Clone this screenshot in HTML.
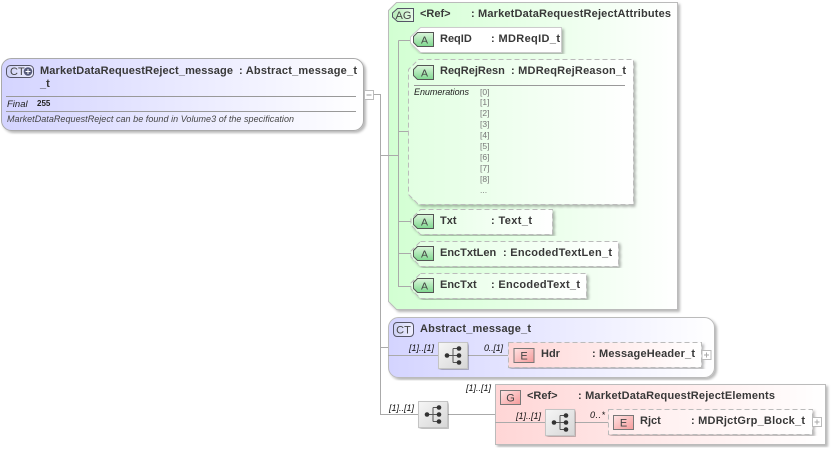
<!DOCTYPE html>
<html><head><meta charset="utf-8"><style>
html,body{margin:0;padding:0;background:#fff}
svg{display:block}
text{font-family:"Liberation Sans",sans-serif}
.b{font-size:11px;font-weight:bold;fill:#383838}
.i{font-size:9px;font-style:italic;fill:#222}
.g{font-size:8.5px;fill:#777}
.m{font-size:9px;font-style:italic;fill:#111}
.bt{font-size:11px;fill:#444;text-anchor:middle}
.l{stroke:#aaa;fill:none}
.d{stroke:#bbb;stroke-dasharray:5 3}
</style></head><body>
<svg width="831" height="450" viewBox="0 0 831 450" xmlns="http://www.w3.org/2000/svg">
<defs>
<linearGradient id="blue" x1="0" x2="1" y1="0" y2="0"><stop offset="0" stop-color="#d4d4ff"/><stop offset="1" stop-color="#fff"/></linearGradient>
<linearGradient id="green" x1="0" x2="1" y1="0" y2="0"><stop offset="0" stop-color="#d2ffd2"/><stop offset="1" stop-color="#fff"/></linearGradient>
<linearGradient id="green2" x1="0" x2="1" y1="0" y2="0"><stop offset="0" stop-color="#e2ffe2"/><stop offset="1" stop-color="#fff"/></linearGradient>
<linearGradient id="pink" x1="0" x2="1" y1="0" y2="0"><stop offset="0" stop-color="#ffd6d6"/><stop offset="1" stop-color="#fff"/></linearGradient>
<linearGradient id="pink2" x1="0" x2="1" y1="0" y2="0"><stop offset="0" stop-color="#ffecec"/><stop offset="1" stop-color="#fff"/></linearGradient>
<linearGradient id="bA" x1="0" x2="0" y1="0" y2="1"><stop offset="0" stop-color="#dcf6dc"/><stop offset="1" stop-color="#7fd88f"/></linearGradient>
<linearGradient id="bAG" x1="0" x2="1" y1="0" y2="0"><stop offset="0" stop-color="#b8ecb8"/><stop offset="1" stop-color="#e8fbe8"/></linearGradient>
<linearGradient id="bE" x1="0" x2="1" y1="0" y2="1"><stop offset="0" stop-color="#ffe4e4"/><stop offset="1" stop-color="#f59a9a"/></linearGradient>
<linearGradient id="bC" x1="0" x2="1" y1="0" y2="0"><stop offset="0" stop-color="#cfd2f5"/><stop offset="1" stop-color="#eeeeff"/></linearGradient>
<linearGradient id="seq" x1="0" x2="1" y1="0" y2="1"><stop offset="0" stop-color="#f6f6f6"/><stop offset="1" stop-color="#d6d6d6"/></linearGradient>
<filter id="sh" x="-5%" y="-5%" width="110%" height="110%"><feDropShadow dx="2" dy="2" stdDeviation="1.2" flood-color="#000" flood-opacity=".28"/></filter>
<g id="seqi">
<rect x="0.5" y="0.5" width="29" height="26" fill="url(#seq)" stroke="#c4c4c4" filter="url(#sh)"/>
<path d="M10 13.5H15M15 6.5V20.5M15 6.5H21M15 13.5H21M15 20.5H21" stroke="#555" fill="none"/>
<circle cx="9" cy="13.5" r="2.3" fill="#333"/><circle cx="21" cy="6.5" r="2.3" fill="#333"/><circle cx="21" cy="13.5" r="2.3" fill="#333"/><circle cx="21" cy="20.5" r="2.3" fill="#333"/>
</g>
<g id="bdgA">
<path d="M4.5 .5H20.5V14.5H4.5L.5 10.5V4.5Z" fill="url(#bA)" stroke="#555"/>
<text x="11.500" y="11.500" class="bt" style="font-size:10.5px">A</text>
</g>
<g id="plus">
<rect x=".5" y=".5" width="9" height="9" fill="#fff" stroke="#bbb"/><path d="M2.5 5H7.5M5 2.5V7.5" stroke="#aaa"/>
</g>
</defs>

<!-- outer connectors -->
<path class="l" d="M373 94.500H380.500V414.500H418M380 155.500H388M380 347.500H388M447 414.500H495"/>

<!-- main CT -->
<rect x="1.500" y="58.500" width="362" height="72" rx="10" fill="url(#blue)" stroke="#aaa" filter="url(#sh)"/>
<rect x="6.500" y="65.500" width="27" height="12" rx="4" fill="url(#bC)" stroke="#556"/>
<text x="10" y="75" class="bt" style="text-anchor:start;font-size:11px">CT</text>
<circle cx="28" cy="71.500" r="4.300" fill="#555a7a"/><path d="M25.500 71.500H30.500M28 69V74" stroke="#fff"/>
<text x="40" y="74" class="b" textLength="193">MarketDataRequestReject_message</text>
<text x="239" y="74" class="b" textLength="118">: Abstract_message_t</text>
<text x="40" y="87" class="b">_t</text>
<path d="M6 96.500H356M6 111.500H356" stroke="#999"/>
<text x="7" y="107" class="i" style="font-size:9.5px">Final</text>
<text x="37" y="106" style="font-size:8px;font-weight:bold;fill:#222">255</text>
<text x="7" y="122" class="i" style="fill:#444" textLength="287">MarketDataRequestReject can be found in Volume3 of the specification</text>
<rect x="364.500" y="90.500" width="9" height="9" fill="#fff" stroke="#bbb"/><path d="M366.500 95H371.500" stroke="#999"/>

<!-- AG -->
<path d="M396.500 2.500H677.500V309.500H396.500L388.500 301.500V10.500Z" fill="url(#green)" stroke="#bbb" filter="url(#sh)"/>
<path d="M397.500 8.500H413.500V21.500H397.500L392.500 17V13Z" fill="url(#bAG)" stroke="#556"/>
<text x="403.500" y="19" class="bt" style="font-size:11px">AG</text>
<text x="420" y="17" class="b">&lt;Ref&gt;</text>
<text x="471" y="17" class="b" textLength="200">: MarketDataRequestRejectAttributes</text>

<!-- inner connectors -->
<path class="l" d="M388 155.500H398.500M398.500 40.500V286.500H411M398.500 40.500H411M398.500 131.500H408M398.500 221.500H411M398.500 253.500H411"/>

<!-- ReqID -->
<path d="M420.500 27.500H561.500V52.500H420.500L410.500 43V37Z" fill="#fff" stroke="#ccc" filter="url(#sh)"/>
<use href="#bdgA" x="413" y="32"/>
<text x="440" y="42" class="b">ReqID</text>
<text x="491" y="42" class="b" textLength="69">: MDReqID_t</text>

<!-- ReqRejResn -->
<path d="M418.500 59.500H633.500V204.500H418.500L408.500 194.500V69.500Z" fill="url(#green2)" class="d" filter="url(#sh)"/>
<use href="#bdgA" x="413" y="65"/>
<text x="440" y="74" class="b">ReqRejResn</text>
<text x="511" y="74" class="b" textLength="115">: MDReqRejReason_t</text>
<path d="M414 85.500H625" stroke="#999"/>
<text x="414" y="95" class="i" textLength="55">Enumerations</text>
<text x="480" y="95" class="g">[0]</text>
<text x="480" y="105" class="g">[1]</text>
<text x="480" y="116" class="g">[2]</text>
<text x="480" y="127" class="g">[3]</text>
<text x="480" y="138" class="g">[4]</text>
<text x="480" y="149" class="g">[5]</text>
<text x="480" y="160" class="g">[6]</text>
<text x="480" y="171" class="g">[7]</text>
<text x="480" y="182" class="g">[8]</text>
<text x="480" y="193" class="g">...</text>

<!-- Txt -->
<path d="M420.500 209.500H552.500V234.500H420.500L411 225V219Z" fill="url(#green2)" class="d" filter="url(#sh)"/>
<use href="#bdgA" x="413" y="214"/>
<text x="440" y="224" class="b">Txt</text>
<text x="491" y="224" class="b" textLength="41">: Text_t</text>

<!-- EncTxtLen -->
<path d="M420.500 241.500H618.500V266.500H420.500L411 257V251Z" fill="url(#green2)" class="d" filter="url(#sh)"/>
<use href="#bdgA" x="413" y="246"/>
<text x="440" y="256" class="b">EncTxtLen</text>
<text x="503" y="256" class="b" textLength="109">: EncodedTextLen_t</text>

<!-- EncTxt -->
<path d="M420.500 273.500H586.500V298.500H420.500L411 289V283Z" fill="url(#green2)" class="d" filter="url(#sh)"/>
<use href="#bdgA" x="413" y="278"/>
<text x="440" y="288" class="b">EncTxt</text>
<text x="491" y="288" class="b" textLength="89">: EncodedText_t</text>

<!-- Abstract -->
<rect x="388.500" y="317.500" width="326" height="60" rx="10" fill="url(#blue)" stroke="#bbb" filter="url(#sh)"/>
<rect x="393.500" y="322.500" width="20" height="14" rx="3.500" fill="url(#bC)" stroke="#556"/>
<text x="403.500" y="333.500" class="bt">CT</text>
<text x="420" y="332" class="b" textLength="111">Abstract_message_t</text>
<path class="l" d="M388 355.500H438M467 355.500H508"/>
<text x="409" y="351" class="m" textLength="25">[1]..[1]</text>
<use href="#seqi" x="438" y="342"/>
<text x="484" y="351" class="m" textLength="19">0..[1]</text>
<path d="M508.500 342.500H701.500V367.500H508.500Z" fill="url(#pink)" class="d" filter="url(#sh)"/>
<rect x="514" y="348.500" width="20" height="14" fill="url(#bE)" stroke="#777"/>
<text x="524" y="359.500" class="bt">E</text>
<text x="541" y="357" class="b">Hdr</text>
<text x="592" y="357" class="b" textLength="103">: MessageHeader_t</text>
<use href="#plus" x="701.500" y="350"/>

<!-- G -->
<rect x="495.500" y="384.500" width="330" height="60" fill="url(#pink)" stroke="#bbb" filter="url(#sh)"/>
<rect x="500.500" y="390.500" width="20" height="14" fill="url(#bE)" stroke="#777"/>
<text x="510.500" y="401.500" class="bt">G</text>
<text x="527" y="399" class="b">&lt;Ref&gt;</text>
<text x="578" y="399" class="b" textLength="197">: MarketDataRequestRejectElements</text>
<text x="466" y="391" class="m" textLength="25">[1]..[1]</text>
<text x="389" y="411" class="m" textLength="25">[1]..[1]</text>
<use href="#seqi" x="418" y="401"/>
<path class="l" d="M495 422.500H545M574 422.500H608"/>
<text x="516" y="419" class="m" textLength="25">[1]..[1]</text>
<use href="#seqi" x="545" y="409"/>
<text x="590" y="418" class="m" textLength="15">0..*</text>
<path d="M608.500 409.500H812.500V434.500H608.500Z" fill="url(#pink2)" class="d" filter="url(#sh)"/>
<rect x="613.500" y="415.500" width="20" height="14" fill="url(#bE)" stroke="#777"/>
<text x="623.500" y="426.500" class="bt">E</text>
<text x="640" y="424" class="b">Rjct</text>
<text x="691" y="424" class="b" textLength="114">: MDRjctGrp_Block_t</text>
<use href="#plus" x="812" y="417"/>
</svg>
</body></html>
